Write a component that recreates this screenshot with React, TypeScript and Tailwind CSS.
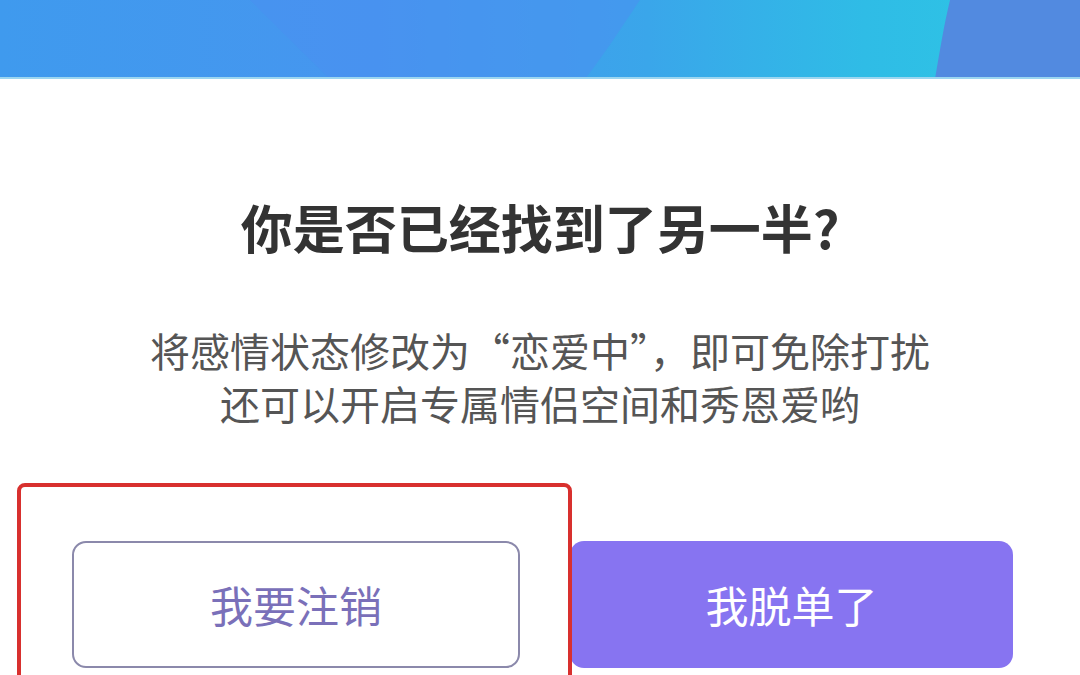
const cjk = { fontFamily: '"Noto Sans CJK SC", "Noto Sans", sans-serif' }

function Header() {
  return (
    <div className="relative h-[79px] w-full overflow-hidden bg-[#4597ee]">
      <svg className="absolute inset-0" width="1080" height="79" viewBox="0 0 1080 79" preserveAspectRatio="none">
        <defs>
          <linearGradient id="g1" x1="0" y1="0" x2="1" y2="0">
            <stop offset="0" stopColor="#3f9aee" />
            <stop offset="0.35" stopColor="#4696ef" />
            <stop offset="0.6" stopColor="#3aa6ea" />
            <stop offset="0.8" stopColor="#2fbce6" />
            <stop offset="1" stopColor="#2ec8e4" />
          </linearGradient>
        </defs>
        <rect x="0" y="0" width="1080" height="79" fill="url(#g1)" />
        <path d="M250 0 L640 0 C620 30 600 60 585 79 L330 79 C300 50 275 25 250 0 Z" fill="#4a90f0" opacity="0.55" />
        <path d="M950 0 L1080 0 L1080 79 L935 79 C940 50 944 25 950 0 Z" fill="#528ae0" />
      </svg>
      <div className="absolute bottom-0 left-0 h-[2px] w-full bg-[#9cd6f0]" />
    </div>
  )
}

export default function App() {
  return (
    <div className="relative h-[675px] w-[1080px] overflow-hidden bg-white" style={cjk}>
      <Header />
      <div className="flex flex-col items-center">
        <h1 className="mt-[116px] text-[52px] font-bold leading-[64px] text-[#333333]">你是否已经找到了另一半?</h1>
        <div className="mt-[65px] flex flex-col items-center text-[40px] leading-[53px] text-[#555555]">
          <p>将感情状态修改为“恋爱中”，即可免除打扰</p>
          <p>还可以开启专属情侣空间和秀恩爱哟</p>
        </div>
        <div className="mt-[111px] flex w-full gap-[50px] pl-[72px]">
          <button className="flex h-[127px] w-[448px] items-center justify-center rounded-[14px] border-2 border-[#8b89ab] text-[43px] text-[#7a70b9]">
            我要注销
          </button>
          <button className="flex h-[127px] w-[443px] items-center justify-center rounded-[14px] bg-[#8774f1] text-[43px] text-white">
            我脱单了
          </button>
        </div>
      </div>
      <div className="absolute left-[17px] top-[483px] h-[220px] w-[555px] rounded-[8px] border-[4px] border-[#d8302e]" />
    </div>
  )
}
